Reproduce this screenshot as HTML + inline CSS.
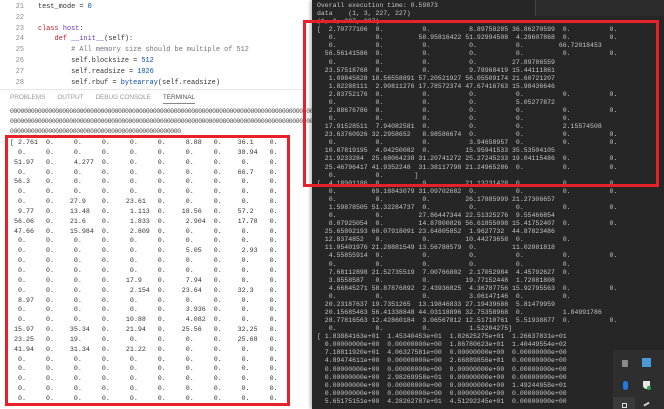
<!DOCTYPE html>
<html><head><meta charset="utf-8"><style>
*{margin:0;padding:0;box-sizing:border-box}
body{width:664px;height:409px;overflow:hidden;background:#fff;position:relative;font-family:"Liberation Mono",monospace}
.abs{position:absolute}
pre{font-family:"Liberation Mono",monospace;white-space:pre;margin:0}
#code{left:0;top:2px;font-size:6.9px;line-height:10.8px;color:#333}
#code .n{display:inline-block;width:24px;text-align:right;color:#8a8a8a;margin-right:14px}
.k{color:#cf222e}.b{color:#0550ae}.c{color:#6e7781}.f{color:#6639ba}
#tabs{left:10px;top:94px;font-family:"Liberation Sans",sans-serif;font-size:6.5px;color:#9a9a9a;letter-spacing:-0.1px}
#tabs span{margin-right:12px}
#zeros{left:10px;top:107px;font-size:6.4px;line-height:10px;color:#444;letter-spacing:-0.35px}
#ld{left:10px;top:139px;font-size:6.67px;line-height:9.85px;color:#333}
#dark{left:312px;top:0;width:352px;height:409px;background:#262626;box-shadow:-2px 0 3px rgba(0,0,0,.25)}
#topbar{left:535px;top:0;width:129px;height:16px;background:#2c2c2c;border-left:1px solid #444}
#rd{left:317px;top:2px;font-size:6.5px;line-height:8.08px;color:#c4c4c4}
.red{border:3px solid #e8202a}
#tray{left:613px;top:350px;width:51px;height:59px;background:#2e2e2e}
</style></head><body>
<pre id="code" class="abs"><span class="n">21</span>test_mode = <span class="b">0</span>
<span class="n">22</span>
<span class="n">23</span><span class="k">class</span> <span class="f">host</span>:
<span class="n">24</span>    <span class="k">def</span> <span class="f">__init__</span>(self):
<span class="n">25</span>        <span class="c"># All memory size should be multiple of 512</span>
<span class="n">26</span>        self.blocksize = <span class="b">512</span>
<span class="n">27</span>        self.readsize = <span class="b">1026</span>
<span class="n">28</span>        self.rbuf = <span class="b">bytearray</span>(self.readsize)</pre>
<div class="abs" style="left:0;top:89px;width:307px;height:1px;background:#e6e6e6"></div>
<div id="tabs" class="abs"><span>PROBLEMS</span><span>OUTPUT</span><span>DEBUG CONSOLE</span><span style="color:#555;border-bottom:1px solid #888;padding-bottom:2px">TERMINAL</span></div>
<pre id="zeros" class="abs">000000000000000000000000000000000000000000000000000000000000000000000000000000000000000000000000000
000000000000000000000000000000000000000000000000000000000000000000000000000000000000000000000000000
0000000000000000000000000000000000000000000000000</pre>
<pre id="ld" class="abs">[ 2.761  0.     0.     0.     0.     0.     8.88   0.    36.1    0.
  0.     0.     0.     0.     0.     0.     0.     0.    38.94   0.
 51.97   0.     4.277  0.     0.     0.     0.     0.     0.     0.
  0.     0.     0.     0.     0.     0.     0.     0.    66.7    0.
 56.3    0.     0.     0.     0.     0.     0.     0.     0.     0.
  0.     0.     0.     0.     0.     0.     0.     0.     0.     0.
  0.     0.    27.9    0.    23.61   0.     0.     0.     0.     0.
  9.77   0.    13.48   0.     1.113  0.    18.56   0.    57.2    0.
 56.06   0.    21.6    0.     1.833  0.     2.904  0.    17.78   0.
 47.66   0.    15.984  0.     2.809  0.     0.     0.     0.     0.
  0.     0.     0.     0.     0.     0.     0.     0.     0.     0.
  0.     0.     0.     0.     0.     0.     5.05   0.     2.93   0.
  0.     0.     0.     0.     0.     0.     0.     0.     0.     0.
  0.     0.     0.     0.     0.     0.     0.     0.     0.     0.
  0.     0.     0.     0.    17.9    0.     7.94   0.     0.     0.
  0.     0.     0.     0.     2.154  0.    23.64   0.    32.3    0.
  8.97   0.     0.     0.     0.     0.     0.     0.     0.     0.
  0.     0.     0.     0.     0.     0.     3.936  0.     0.     0.
  0.     0.     0.     0.    10.88   0.     4.082  0.     0.     0.
 15.97   0.    35.34   0.    21.94   0.    25.56   0.    32.25   0.
 23.25   0.    19.     0.     0.     0.     0.     0.    25.68   0.
 41.94   0.    31.34   0.    21.22   0.     0.     0.     0.     0.
  0.     0.     0.     0.     0.     0.     0.     0.     0.     0.
  0.     0.     0.     0.     0.     0.     0.     0.     0.     0.
  0.     0.     0.     0.     0.     0.     0.     0.     0.     0.
  0.     0.     0.     0.     0.     0.     0.     0.     0.     0.
  0.     0.     0.     0.     0.     0.     0.     0.     0.     0.</pre>
<div class="abs red" style="left:5px;top:135px;width:285px;height:271px"></div>
<div id="dark" class="abs"></div>
<div id="topbar" class="abs"></div>
<pre id="rd" class="abs">Overall execution time: 0.59873
data    (1, 3, 227, 227)
(1, 3, 227, 227)
[  2.70777106  0.          0.          8.89758285 36.86270599  0.          0.
   0.          0.         58.95816422 51.92994508  4.29607868  0.          0.
   0.          0.          0.          0.          0.         66.72018453
  56.56141586  0.          0.          0.          0.          0.          0.
   0.          0.          0.          0.         27.89786559
  23.57518768  0.          0.          9.78968419 15.44111861
   1.09845828 18.56558891 57.20521927 56.05509174 21.60721207
   1.82288111  2.90811276 17.78572374 47.67416763 15.98436646
   2.83752176  0.          0.          0.          0.          0.          0.
   0.          0.          0.          0.          5.05277872
   2.88676786  0.          0.          0.          0.          0.          0.
   0.          0.          0.          0.          0.          0.
  17.91528511  7.94082581  0.          0.          0.          2.15574508
  23.63760926 32.2958652   8.98586674  0.          0.          0.          0.
   0.          0.          0.          3.94658957  0.          0.          0.
  10.87819195  4.04250082  0.         15.95941533 35.53504105
  21.9233284  25.68064238 31.20741272 25.27245233 19.04115486  0.          0.
  25.46796417 41.9352248  31.38117798 21.24965286  0.          0.          0.
   0.          0.        ]
[  4.18901186  0.          0.         21.13231428  0.          0.          0.
   0.         69.18843079 31.09702682  0.          0.          0.          0.
   0.          0.          0.         26.17885999 21.27306657
   1.59878505 51.32284737  0.          0.          0.          0.          0.
   0.          0.         27.86447344 22.51325276  9.55466854
   8.07925054  0.         14.87800826 56.61855098 15.41752407  0.          0.
  25.65802193 60.07918091 23.64805852  1.9627732  44.87823486
  12.8374852   0.          0.         10.44273658  0.          0.
  11.05401976 21.28881549 13.56788579  0.         11.02081818
   4.55855914  0.          0.          0.          0.          0.          0.
   0.          0.          0.          0.          0.          0.
   7.68112898 21.52735519  7.00766802  2.17052984  4.45792627  0.
   3.8558587   0.          0.         19.77152448  1.72081808
   4.66845271 58.87876892  2.43936825  4.36787756 15.92795563  0.          0.
   0.          0.          0.          3.06147146  0.          0.
  20.23187637 19.7351265  13.19846833 27.19439688  5.81479959
  20.15685463 56.41338848 44.03118896 32.75358968  0.          1.84991786
  28.77816563 12.42860184  3.06567812 12.51710761  5.51938877  0.          0.
   0.          0.          0.          1.52204275]
[ 1.83884163e+01  1.45340453e+01  1.82625275e+01  1.26637831e+01
  0.00000000e+00  0.00000000e+00  1.86780623e+01  1.40449554e+02
  7.18811920e+01  4.06327581e+00  0.00000000e+00  0.00000000e+00
  4.89474611e+00  0.00000000e+00  2.66889856e+01  0.00000000e+00
  0.00000000e+00  0.00000000e+00  0.00000000e+00  0.00000000e+00
  0.00000000e+00  2.98269958e+01  0.00000000e+00  0.00000000e+00
  0.00000000e+00  0.00000000e+00  0.00000000e+00  1.49244958e+01
  0.00000000e+00  0.00000000e+00  0.00000000e+00  0.00000000e+00
  5.65175151e+00  4.28262787e+01  4.51292245e+01  0.00000000e+00</pre>
<div class="abs red" style="left:303px;top:20px;width:356px;height:167px"></div>
<div id="tray" class="abs">
  <div class="abs" style="left:9px;top:10px;width:6px;height:7px;background:#8a8a8a;border-radius:1px"></div>
  <div class="abs" style="left:29px;top:8px;width:9px;height:9px;background:#4a9ad8"></div>
  <div class="abs" style="left:10px;top:31px;width:5px;height:9px;background:#1f7be0;border-radius:3px"></div>
  <div class="abs" style="left:30px;top:31px;width:7px;height:8px;background:#e8e8e8;border-radius:0 0 4px 4px"></div>
  <div class="abs" style="left:34px;top:36px;width:4px;height:4px;background:#2ea043;border-radius:2px"></div>
  <div class="abs" style="left:0;top:47px;width:22px;height:12px;background:#3a3a3a"></div>
  <div class="abs" style="left:9px;top:53px;width:5px;height:5px;border:1px solid #ddd"></div>
  <div class="abs" style="left:31px;top:53px;width:6px;height:4px;border-top:2px solid #ccc;transform:rotate(-30deg)"></div>
</div>
</body></html>
